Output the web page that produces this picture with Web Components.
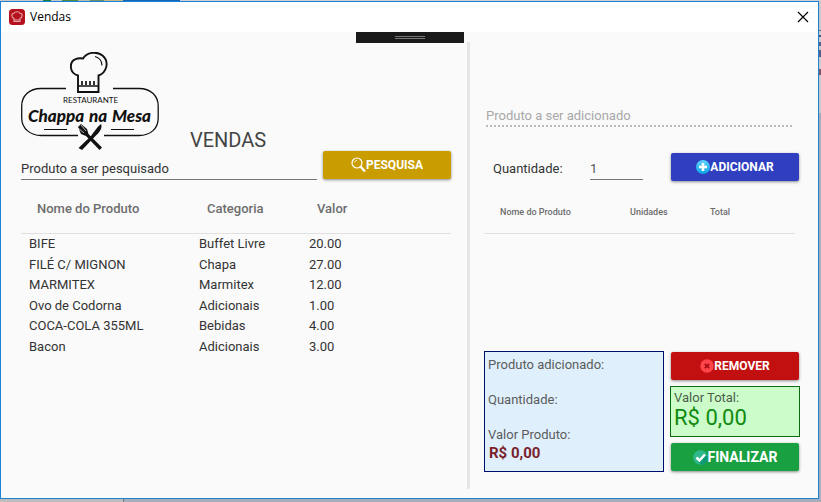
<!DOCTYPE html>
<html lang="pt-BR">
<head>
<meta charset="utf-8">
<title>Vendas</title>
<style>
html{height:100%}
body{margin:0;height:100%;box-sizing:border-box;padding:1px 2px 3px 0;font:13px/18px Roboto,"Liberation Sans",sans-serif;color:#444;
background:
linear-gradient(90deg,#c9c9c9 0 43px,#1b7a35 43px 51px,#c9c9c9 51px 62px,#4f8a44 62px 78px,#b7bcab 78px 90px,#6d8e60 90px 104px,#c5b88e 104px 123px,#1565b5 123px 180px,#d0d0d0 180px) top/100% 1px no-repeat,
linear-gradient(90deg,#bdbdbd 0 123px,#777 123px 124px,#a7adba 124px) bottom/100% 3px no-repeat,
linear-gradient(#c8c8c8 0 30px,#5c6784 30px 31px,#c8c8c8 31px 35px,#4d5a80 35px 37px,#ccc 37px 42px,#56628a 42px 46px,#ccc 46px 50px,#56628a 50px 57px,#ccc 57px 69px,#7b5a68 69px 75px,#c8c8c8 75px 113px,#a7adba 113px) right/2px 100% no-repeat,#bbb}
</style>
</head>
<body>
<sales-window></sales-window>
<script>
const define=(name,html,setup)=>customElements.define(name,class extends HTMLElement{
  constructor(){
    super();
    const t=document.createElement('template');
    t.innerHTML=html;
    this.attachShadow({mode:'open'}).append(t.content.cloneNode(true));
  }
  connectedCallback(){ if(setup) setup(this,this.shadowRoot); }
});

define('app-icon',`<style>:host{display:block;width:16px;height:16px}svg{display:block}</style>
<svg width="16" height="16" viewBox="0 0 16 16"><rect width="16" height="16" rx="3.5" fill="#b5121f"/>
<path d="M5 12.500V9.500C2.300 8.500 2 4.500 5 4.200c1-2 5-2 6 0 3 .3 2.700 4.300 0 5.300v3z" fill="none" stroke="#e9a4a8" stroke-width="1.1"/><path d="M5 11h6" stroke="#e9a4a8"/></svg>`);

define('title-bar',`<style>
:host{display:flex;align-items:center;height:30px;padding:0 9px 0 8px;gap:5px;background:#fff;color:#000;font:12px/16px "Open Sans","Noto Sans",sans-serif}
span{flex:1}
button{border:0;background:none;padding:0;width:12px;height:12px}
svg{display:block}
</style><app-icon></app-icon><span><slot></slot></span>
<button type="button" aria-label="Fechar"><svg width="12" height="12" viewBox="0 0 12 12"><path d="M1 1l10 10M11 1L1 11" stroke="#000" stroke-width="1.2"/></svg></button>`);

define('brand-logo',`<style>:host{display:block;width:139px;height:99px}svg{display:block}
.small{font:8px "Lato",sans-serif}.script{font:italic 900 17px "Lato",sans-serif}</style>
<svg width="139" height="99" viewBox="0 0 139 99" role="img">
<g fill="none" stroke="#111">
<path d="M45 36.500H20C8 36.500 .700 44 .700 54V66C.700 77 10 83.500 20 83.500H57M92 36.500H118C130 36.500 137.200 44 137.200 54V66C137.200 77 129 83.500 118 83.500H83" stroke-width="1.300"/>
<path d="M23 77.500H46M90 77.500H113" stroke-width="1.200"/>
<path d="M57 40V23.500C48 21 48 10 54.500 7.200c2.500-1.200 5-1.200 7.500-.7C66 0 76-1 81.500 3.500c7 6 4.500 17-4 20V40z" stroke-width="1.900"/>
<path d="M57 34H77M61 33V29M65 33V29M69 33V29M73 33V29" stroke-width="1.700"/>
<path d="M74 4.500c4 1 7 4.500 7 9" stroke-width="1.200"/>
</g>
<text class="small" y="51" x="42" fill="#111">RESTAURANTE</text>
<text class="script" y="70" fill="#111"><tspan x="7">Chappa</tspan> <tspan x="68">na</tspan> <tspan x="91">Mesa</tspan></text>
<g fill="#111"><path d="M80 72c2 4-2 9-6 12.500L61 98l-3.500-2 12.500-12c3-4 6-9 10-12z"/>
<path d="M57 75l3-3 6 5 1.500 5L81 95.500 78.500 98 65 84l-5-2z"/></g>
<path d="M60 73l5 6M57 76l6 5" stroke="#fafafa" stroke-width=".7"/>
</svg>`);

define('action-button',`<style>
:host{display:block;height:28px}
button{display:flex;align-items:center;justify-content:center;width:100%;height:100%;padding:0;border:0;border-radius:2px;background:var(--fill);color:#fff;font:700 var(--size,12px)/16px Roboto,sans-serif;box-shadow:0 1px 3px rgba(0,0,0,.45)}
::slotted(svg){display:block;flex:none}
</style><button type="button"><slot></slot></button>`);

define('text-field',`<style>
:host{display:block}
input{display:block;box-sizing:border-box;width:100%;height:29px;margin:0;padding:6px 0 0;border:0;border-bottom:1px solid #757575;border-radius:0;background:none;outline:0;color:#333;font:inherit}
input::placeholder{color:#333;opacity:1}
:host([compact]) input{height:27px;padding-top:4px;color:#555}
:host([disabled]) input{border-bottom:0;padding:0 0 1px;height:22px;background:repeating-linear-gradient(90deg,#bbb 0 2px,transparent 2px 4px) bottom/100% 2px no-repeat}
:host([disabled]) input::placeholder{color:#a8a8a8}
</style><input type="text">`,(h,r)=>{
  const i=r.querySelector('input');
  i.placeholder=h.getAttribute('placeholder')||'';
  i.value=h.getAttribute('value')||'';
  i.disabled=h.hasAttribute('disabled');
  i.setAttribute('aria-label',h.getAttribute('label')||i.placeholder);
});

define('data-grid',`<style>
:host{display:block}
table{width:100%;border-collapse:separate;border-spacing:0;table-layout:fixed}
col:nth-child(1){width:var(--c1)}col:nth-child(2){width:var(--c2)}
th{box-sizing:border-box;height:54px;padding:var(--drop,4px) 0 0 16px;text-align:left;font-weight:500;color:#6d6d6d;border-bottom:1px solid #e1e1e1;font-size:var(--head,13px)}
td{height:20px;padding:0 0 0 8px;line-height:18px;color:#333}
tr:nth-child(even) td{height:21px}
</style><table><colgroup><col><col><col></colgroup><thead><tr></tr></thead><tbody></tbody></table>`,(h,r)=>{
  const row=(tr,cells,tag)=>cells.forEach(c=>{const e=document.createElement(tag);e.textContent=c;tr.append(e)});
  row(r.querySelector('thead tr'),h.getAttribute('columns').split('|'),'th');
  (h.getAttribute('rows')||'').split(';').filter(Boolean).forEach(line=>{
    const tr=document.createElement('tr');row(tr,line.split('|'),'td');r.querySelector('tbody').append(tr);
  });
});

define('search-pane',`<style>
:host{display:block;padding:20px 16px 0 20px}
header{display:flex;align-items:flex-end;gap:30px}
h1{margin:0;font:400 20px/22px Roboto,sans-serif;color:#444}
.search{display:flex;gap:6px}
text-field{flex:1}
action-button{flex:0 0 128px;--fill:#c99c00}
data-grid{--c1:170px;--c2:110px}
</style>
<header><brand-logo></brand-logo><h1>VENDAS</h1></header>
<div class="search"><text-field placeholder="Produto a ser pesquisado"></text-field>
<action-button><svg width="15" height="16" viewBox="0 0 15 16"><circle cx="6" cy="6" r="5" fill="none" stroke="#fff" stroke-width="1.200"/><path d="M3.500 5.500Q4 3.500 6 3.200" fill="none" stroke="#fff" stroke-width=".8"/><path d="M9.500 9.500L14 14.500" stroke="#fff" stroke-width="2.400"/></svg>PESQUISA</action-button></div>
<data-grid columns="Nome do Produto|Categoria|Valor" rows="BIFE|Buffet Livre|20.00;FILÉ C/ MIGNON|Chapa|27.00;MARMITEX|Marmitex|12.00;Ovo de Codorna|Adicionais|1.00;COCA-COLA 355ML|Bebidas|4.00;Bacon|Adicionais|3.00"></data-grid>`);

define('item-summary',`<style>
:host{display:block;box-sizing:border-box;border:1px solid #000f6b;background:#dfeffb;padding:4px 3px 10px;color:#5c5c5c}
dl{margin:0}dt{height:18px}dd{margin:0;height:17px}
dd.price{padding-left:1px;font:700 15px/18px Roboto,sans-serif;color:#7a1f2b}
</style><dl><dt>Produto adicionado:</dt><dd></dd><dt>Quantidade:</dt><dd></dd><dt>Valor Produto:</dt><dd class="price">R$ 0,00</dd></dl>`);

define('total-box',`<style>
:host{display:block;box-sizing:border-box;border:1px solid #0a6b12;background:#cbfcc9;padding:2px 3px;color:#4c5f4c}
output{display:block;font:400 22px/22px Roboto,sans-serif;color:#108a10}
label{display:block;line-height:18px}
</style><label for="total">Valor Total:</label><output id="total">R$ 0,00</output>`);

define('order-pane',`<style>
:host{display:flex;flex-direction:column;padding:73px 18px 26px 14px}
.name{margin:0 6px 26px 2px}
.qty{display:flex;align-items:flex-start;padding:0 1px 0 9px}
.qty span{flex:1;padding-top:6px;color:#333;line-height:19px}
.qty text-field{flex:0 0 53px;margin-right:28px}
.add{flex:0 0 128px;--fill:#2f3fbf}
data-grid{--c1:130px;--c2:80px;--head:9px;--drop:10px;margin:-1px 5px 0 0;flex:1}
footer{display:grid;grid-template-columns:minmax(0,1fr) 130px;gap:6px}
.side{display:flex;flex-direction:column;gap:6px;padding:1px 0}
.side action-button{margin:0 1px}
.del{--fill:#c21010}
.end{--fill:#18a041;--size:14px}
total-box{flex:1}
</style>
<text-field class="name" disabled placeholder="Produto a ser adicionado"></text-field>
<div class="qty"><span>Quantidade:</span><text-field compact label="Quantidade" value="1"></text-field>
<action-button class="add"><svg width="14" height="14" viewBox="0 0 14 14"><defs><linearGradient id="g" x2="0" y2="1"><stop stop-color="#61d4ff"/><stop offset="1" stop-color="#0aa3e4"/></linearGradient></defs><circle cx="7" cy="7" r="7" fill="url(#g)"/><path d="M7 3v8M3 7h8" stroke="#fff" stroke-width="2.600"/></svg>ADICIONAR</action-button></div>
<data-grid columns="Nome do Produto|Unidades|Total"></data-grid>
<footer><item-summary></item-summary><div class="side">
<action-button class="del"><svg width="14" height="14" viewBox="0 0 14 14"><circle cx="7" cy="7" r="6.700" fill="#ff4549"/><path d="M4.800 4.800l4.400 4.400M9.200 4.800L4.800 9.200" stroke="#a50d12" stroke-width="1.700"/></svg>REMOVER</action-button>
<total-box></total-box>
<action-button class="end"><svg width="15" height="15" viewBox="0 0 15 15"><circle cx="7.500" cy="7.500" r="7.300" fill="#2fb98b"/><path d="M12 4l3 3a7.300 7.300 0 0 1-7 8L5 11z" fill="#109a74"/><path d="M3.500 7.500l3 3L12 4.500" fill="none" stroke="#fff" stroke-width="2.500"/></svg>FINALIZAR</action-button>
</div></footer>`);

define('debug-handle',`<style>
:host{position:absolute;top:30px;left:50%;transform:translateX(-50%);display:flex;flex-direction:column;align-items:center;justify-content:center;gap:1px;width:108px;height:11px;background:#1a1a1a}
i{width:30px;height:1px;background:#777}
</style><i></i><i></i>`);

define('sales-window',`<style>
:host{display:flex;flex-direction:column;position:relative;box-sizing:border-box;min-height:100%;border:1px solid #1a83d8;background:#fafafa}
main{flex:1;display:grid;grid-template-columns:466fr 3px 348fr}
.bar{background:#e6e6e6;margin:10px 0 9px}
</style>
<title-bar>Vendas</title-bar>
<main><search-pane></search-pane><div class="bar"></div><order-pane></order-pane></main>
<debug-handle></debug-handle>`);
</script>
</body>
</html>
